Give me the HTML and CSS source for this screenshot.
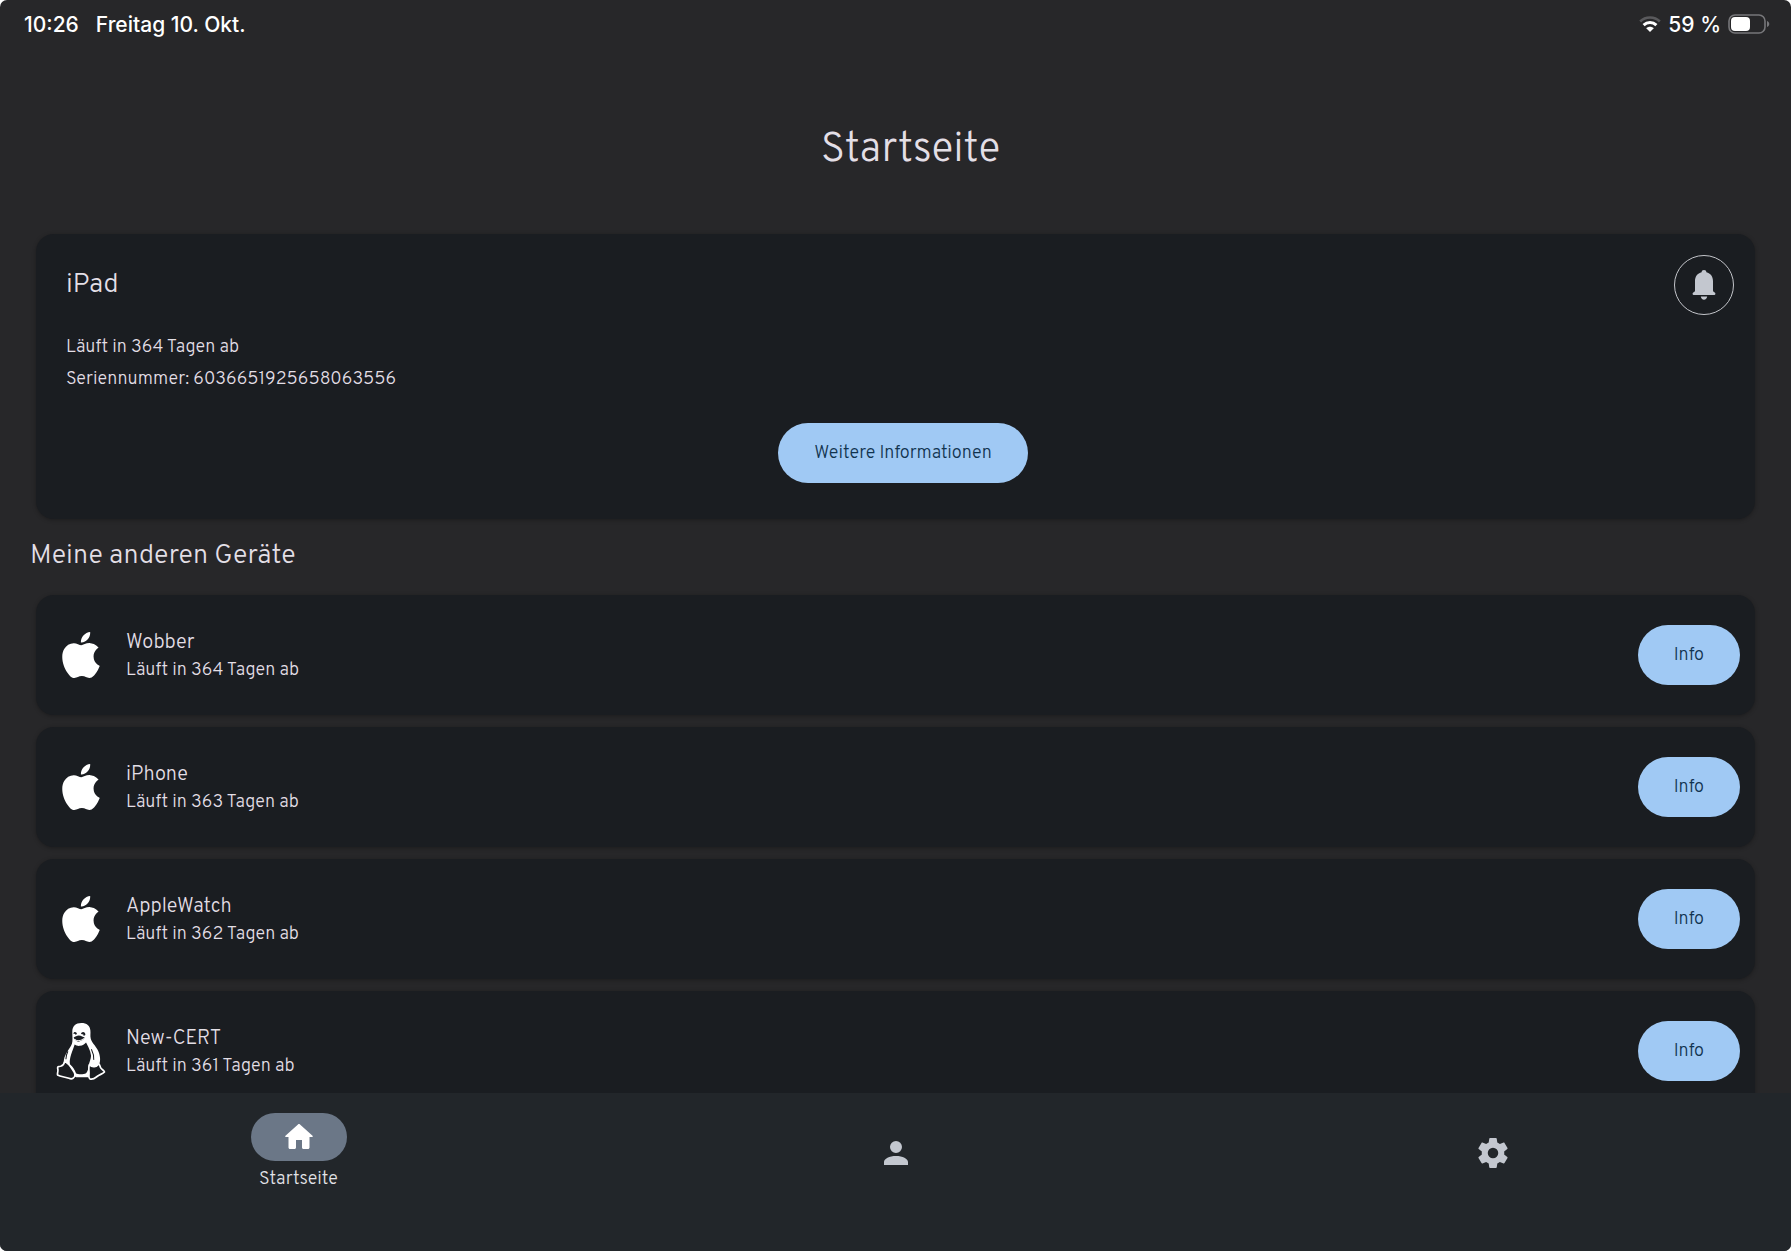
FILE: index.html
```html
<!DOCTYPE html>
<html lang="de">
<head>
<meta charset="utf-8">
<meta name="viewport" content="width=device-width, initial-scale=1">
<title>Startseite</title>
<link rel="stylesheet" href="styles.css">
</head>
<body>
<svg class="sprite" aria-hidden="true">
  <symbol id="apple" viewBox="0 0 24 24"><path fill="currentColor" d="M12.152 6.896c-.948 0-2.415-1.078-3.96-1.04-2.04.027-3.91 1.183-4.961 3.014-2.117 3.675-.546 9.103 1.519 12.09 1.013 1.454 2.208 3.09 3.792 3.039 1.52-.065 2.09-.987 3.935-.987 1.831 0 2.35.987 3.96.948 1.637-.026 2.676-1.48 3.676-2.948 1.156-1.688 1.636-3.325 1.662-3.415-.039-.013-3.182-1.221-3.22-4.857-.026-3.04 2.48-4.494 2.597-4.559-1.429-2.09-3.623-2.324-4.39-2.376-2-.156-3.675 1.09-4.61 1.09zM15.53 3.83c.843-1.012 1.4-2.427 1.245-3.83-1.207.052-2.662.805-3.532 1.818-.78.896-1.454 2.338-1.273 3.714 1.338.104 2.715-.688 3.559-1.701"/></symbol>
</svg>
<div class="app">
  <header class="status">
    <span class="status-text">10:26</span>
    <span class="status-text">Freitag 10. Okt.</span>
    <span class="status-right">
      <svg class="wifi" viewBox="0 0 22 16" aria-hidden="true">
        <path d="M1.200 5.500C6.500 .2 15.500 .2 20.800 5.500" fill="none" stroke="#59595c" stroke-width="2.600"/>
        <path d="M4.600 9.200C8.300 5.600 13.700 5.600 17.400 9.200" fill="none" stroke="#fff" stroke-width="3"/>
        <path d="M7.200 12.200C9.400 10.200 12.600 10.200 14.800 12.200L11 16Z" fill="#fff"/>
      </svg>
      <span class="status-text">59 %</span>
      <svg class="battery" viewBox="0 0 42 20" aria-hidden="true">
        <rect x="1" y="1" width="36" height="18" rx="6" fill="none" stroke="#77777a" stroke-width="1.600"/>
        <rect x="3" y="3" width="19" height="14" rx="4" fill="#fff"/>
        <path d="M39 7c3 1 3 5 0 6z" fill="#77777a"/>
      </svg>
    </span>
  </header>

  <main class="content">
    <h1 class="title">Startseite</h1>

    <section class="card device">
      <div class="device-head">
        <h2 class="heading">iPad</h2>
        <button class="bell" type="button" aria-label="Benachrichtigungen">
          <svg viewBox="0 0 24 30" aria-hidden="true"><path fill="currentColor" d="M12 0c1.500 0 2.300.9 2.400 2.300C18.500 3.300 21 6.700 21 11v9.500c0 .8.400 1.200 1 1.600l1 .7c.8.700.5 2.200-.7 2.200H1.700C.5 25 .2 23.500 1 22.800l1-.7c.6-.4 1-.8 1-1.600V11c0-4.300 2.500-7.700 6.600-8.700C9.700.9 10.500 0 12 0zM8.800 26.500h6.400C15 28.400 13.700 29.700 12 29.700S9 28.400 8.800 26.500z"/></svg>
        </button>
      </div>
      <p class="line">Läuft in 364 Tagen ab</p>
      <p class="line">Seriennummer: 6036651925658063556</p>
      <button class="pill more" type="button">Weitere Informationen</button>
    </section>

    <h2 class="heading others">Meine anderen Geräte</h2>
    <ul class="list">
      <li class="card row">
        <svg class="logo" aria-hidden="true"><use href="#apple"/></svg>
        <div class="row-text"><h3 class="name">Wobber</h3><p class="sub">Läuft in 364 Tagen ab</p></div>
        <button class="pill" type="button">Info</button>
      </li>
      <li class="card row">
        <svg class="logo" aria-hidden="true"><use href="#apple"/></svg>
        <div class="row-text"><h3 class="name">iPhone</h3><p class="sub">Läuft in 363 Tagen ab</p></div>
        <button class="pill" type="button">Info</button>
      </li>
      <li class="card row">
        <svg class="logo" aria-hidden="true"><use href="#apple"/></svg>
        <div class="row-text"><h3 class="name">AppleWatch</h3><p class="sub">Läuft in 362 Tagen ab</p></div>
        <button class="pill" type="button">Info</button>
      </li>
      <li class="card row">
        <svg class="logo tux" viewBox="0 0 146 170" aria-hidden="true">
          <path fill="#fff" d="M74 0C57 0 47 10 47 26c0 14 2 26-1 36-4 12-20 27-24 48-2 10 0 22 6 30l30 22h40l26-34c8-10 7-24 3-38-5-18-22-30-25-44-2-8 0-16-1-24C100 8 90 0 74 0z"/>
          <path fill="#1a1d21" d="M54 64c4 3 10 5 16 4 8-1 13-5 18-10 5 10 14 24 15 40 0 10-6 20-7 30-1 9-4 18-8 22-8 4-24 4-30 0-3-10-8-17-18-27-3-19 8-40 14-59z"/>
          <path fill="none" stroke="#1a1d21" stroke-width="3" d="M34 84c-4 8-6 14-6 24M104 78c5 10 8 20 7 32"/>
          <path fill="#1a1d21" d="M50 32c1-7 10-7 11 1l-4 2-3-3zM73 33c1-9 14-8 13 3l-5 3-1-5zM51 43c5-3 10-6 15-6 8 1 14 4 18 7-2 5-9 8-18 12-7-2-12-6-15-13z"/>
          <path fill="none" stroke="#fff" stroke-width="3" d="M54 49c8 6 18 5 29-3"/>
          <path fill="#1a1d21" stroke="#fff" stroke-width="5" stroke-linejoin="round" d="M24 116c-2 8-6 12-12 13-8 0-10 2-8 9 1 7-2 11-1 17 9 5 24 6 34 10 10 4 17-1 18-10 0-8-5-13-10-20-6-8-12-19-21-19zM98 124c-3 8-1 18-1 25 0 8-2 14 2 17 9 5 17-3 24-8 7-5 15-6 20-12-1-5-8-7-11-12-3-4-2-9-6-12-8 10-19 12-28 2z"/>
        </svg>
        <div class="row-text"><h3 class="name">New-CERT</h3><p class="sub">Läuft in 361 Tagen ab</p></div>
        <button class="pill" type="button">Info</button>
      </li>
    </ul>
  </main>

  <nav class="tabs">
    <a class="tab active" href="#start">
      <span class="indicator"><svg class="icon" viewBox="0 0 24 24" aria-hidden="true"><path fill="currentColor" d="M10 19v-5h4v5c0 .55.45 1 1 1h3c.55 0 1-.45 1-1v-7h1.700c.46 0 .68-.57.33-.87L12.670 3.600c-.38-.34-.96-.34-1.340 0l-8.360 7.530c-.34.3-.13.87.33.87H5v7c0 .55.45 1 1 1h3c.55 0 1-.45 1-1z"/></svg></span>
      <span class="tab-label">Startseite</span>
    </a>
    <a class="tab" href="#profil" aria-label="Profil">
      <svg class="icon" viewBox="0 0 24 24" aria-hidden="true"><path fill="currentColor" d="M12 4a4 4 0 1 1 0 8 4 4 0 0 1 0-8m0 10c4.420 0 8 1.790 8 4v2H4v-2c0-2.210 3.580-4 8-4z"/></svg>
    </a>
    <a class="tab" href="#einstellungen" aria-label="Einstellungen">
      <svg class="icon" viewBox="0 0 24 24" aria-hidden="true"><path fill="currentColor" d="M12,15.5A3.5,3.5 0 0,1 8.5,12A3.5,3.5 0 0,1 12,8.5A3.5,3.5 0 0,1 15.5,12A3.5,3.5 0 0,1 12,15.5M19.43,12.97C19.47,12.65 19.5,12.33 19.5,12C19.5,11.67 19.47,11.34 19.43,11L21.54,9.37C21.73,9.22 21.78,8.95 21.66,8.73L19.66,5.27C19.54,5.05 19.27,4.96 19.05,5.05L16.56,6.05C16.04,5.66 15.5,5.32 14.87,5.07L14.5,2.42C14.46,2.18 14.25,2 14,2H10C9.75,2 9.54,2.18 9.5,2.42L9.13,5.07C8.5,5.32 7.96,5.66 7.44,6.05L4.95,5.05C4.73,4.96 4.46,5.05 4.34,5.27L2.34,8.73C2.21,8.95 2.27,9.22 2.46,9.37L4.57,11C4.53,11.34 4.5,11.67 4.5,12C4.5,12.33 4.53,12.65 4.57,12.97L2.46,14.63C2.27,14.78 2.21,15.05 2.34,15.27L4.34,18.73C4.46,18.95 4.73,19.03 4.95,18.95L7.44,17.94C7.96,18.34 8.5,18.68 9.13,18.93L9.5,21.58C9.54,21.82 9.75,22 10,22H14C14.25,22 14.46,21.82 14.5,21.58L14.87,18.93C15.5,18.67 16.04,18.34 16.56,17.94L19.05,18.95C19.27,19.03 19.54,18.95 19.66,18.73L21.66,15.27C21.78,15.05 21.73,14.78 21.54,14.63L19.43,12.97Z"/></svg>
    </a>
  </nav>
</div>
</body>
</html>
```
FILE: styles.css
```css
* { box-sizing: border-box; }

body {
  margin: 0;
  background: #fff;
  color: #e3dfe6;
  font-family: Overpass, "Noto Sans", sans-serif;
  font-weight: 300;
  font-size: 18px;
}

h1, h2, h3, p, ul { margin: 0; padding: 0; font-weight: inherit; }
button { font: inherit; border: 0; cursor: pointer; }
svg { display: block; flex: none; }

.sprite { display: none; }

.app {
  display: flex;
  flex-direction: column;
  height: 100vh;
  background: #272729;
  border-radius: 7px;
  overflow: hidden;
}

.status {
  display: flex;
  align-items: center;
  flex: none;
  gap: 17px;
  height: 48px;
  padding: 0 21px 0 24px;
  color: #fff;
  font-family: Inter, sans-serif;
  font-weight: 500;
  font-size: 21px;
}
.status-right { display: flex; align-items: center; gap: 7px; margin-left: auto; }
.wifi { width: 22px; height: 16px; }
.battery { width: 42px; height: 20px; }

.content {
  flex: 1;
  min-height: 0;
  overflow-y: auto;
  scrollbar-width: none;
  padding: 0 36px;
}

.title {
  padding: 75px 0 55px 30px;
  font-size: 41px;
  line-height: 56px;
  text-align: center;
}

.heading { font-size: 27px; line-height: 36px; }

.card {
  background: #1a1d21;
  border-radius: 18px;
  box-shadow: 0 1px 4px rgba(0, 0, 0, .3);
}

.device {
  display: flex;
  flex-direction: column;
  padding: 21px 21px 36px 30px;
}
.device-head {
  display: flex;
  justify-content: space-between;
  align-items: center;
  height: 60px;
  margin-bottom: 17px;
}
.line { line-height: 32px; }

.bell {
  display: grid;
  place-items: center;
  width: 60px;
  height: 60px;
  padding: 0;
  border: 1px solid #c3c5ca;
  border-radius: 50%;
  background: none;
  color: #c3c7cf;
}
.bell svg { width: 24px; height: 30px; }

.pill {
  flex: none;
  height: 60px;
  padding: 0 36px;
  border-radius: 30px;
  background: #a0c9f4;
  color: #11334f;
}
.more { align-self: center; margin: 27px 0 0 6px; }

.others { margin: 19px 0 21px -6px; }

.list { display: grid; gap: 12px; list-style: none; }

.row {
  display: flex;
  align-items: center;
  height: 120px;
  padding: 0 15px 0 20px;
}
.logo { width: 50px; height: 46px; color: #fff; }
.tux { height: 57px; }
.row-text { flex: 1; padding: 3px 0 0 20px; }
.name { font-size: 20px; line-height: 28px; }
.sub { line-height: 28px; }

.tabs {
  display: grid;
  grid-template-columns: repeat(3, 1fr);
  flex: none;
  height: 158px;
  padding: 20px 0 58px;
  background: #22262a;
}
.tab {
  display: flex;
  flex-direction: column;
  align-items: center;
  justify-content: center;
  gap: 6px;
  color: #c3c7cf;
  text-decoration: none;
}
.tab.active { justify-content: flex-start; color: #e3e3e8; }
.indicator {
  display: grid;
  place-items: center;
  width: 96px;
  height: 48px;
  border-radius: 24px;
  background: #6b7787;
  color: #fff;
}
.tab-label { line-height: 26px; }
.icon { width: 36px; height: 36px; }
```
